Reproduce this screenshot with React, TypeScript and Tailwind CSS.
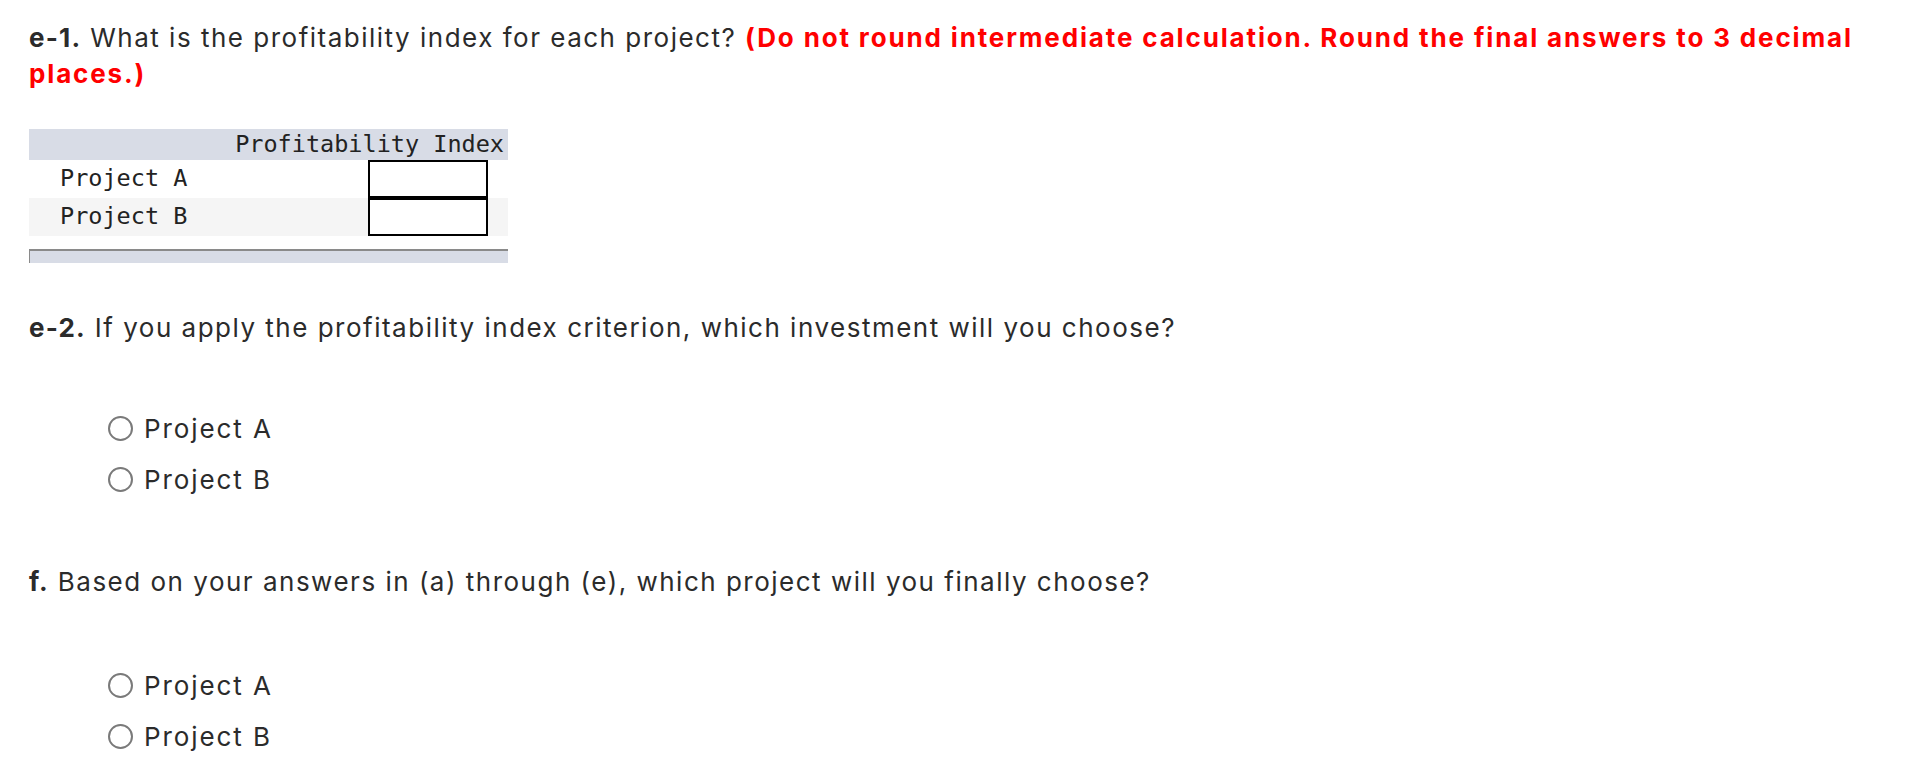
import React from "react";

const sans = "font-['Inter','Noto_Sans',sans-serif]";
const mono = "font-['DejaVu_Sans_Mono','Liberation_Mono',monospace]";

function Radio({ label }: { label: string }) {
  return (
    <label className="flex items-center h-[51px] gap-[11px]">
      <span className="w-[25px] h-[25px] rounded-full border-2 border-[#7a7a7a] bg-white shrink-0" />
      <span className="text-[26px] tracking-[1.9px] text-[#2b2b2b]">{label}</span>
    </label>
  );
}

export default function App() {
  return (
    <div className={`bg-white min-h-[775px] w-[1912px] pl-[29px] pt-[20px] ${sans} text-[#2b2b2b]`}>
      <p className="text-[26px] leading-[36px] tracking-[1.5px]">
        <b className="font-bold tracking-[1.2px]">e-1.</b> What is the profitability index for each project?{" "}
        <b className="font-bold text-[#ff0000] tracking-[1.85px]">
          (Do not round intermediate calculation. Round the final answers to 3 decimal
          <br />
          places.)
        </b>
      </p>

      <div className={`mt-[37px] w-[479px] ${mono} text-[23.5px] text-[#222]`}>
        <div className="h-[31px] bg-[#d8dce6] flex items-center justify-end pr-[4px] leading-none">
          Profitability Index
        </div>
        <div className="h-[38px] bg-white flex items-center">
          <span className="pl-[31px] flex-1">Project A</span>
          <div className="w-[120px] h-[38px] border-2 border-black bg-white mr-[20px]" />
        </div>
        <div className="h-[38px] bg-[#f5f5f5] flex items-center">
          <span className="pl-[31px] flex-1">Project B</span>
          <div className="w-[120px] h-[38px] border-2 border-black bg-white mr-[20px]" />
        </div>
        <div className="mt-[13px] h-[14px] bg-[#d8dce6] border-t-2 border-l border-t-[#8a8a8a] border-l-[#8a8a8a]" />
      </div>

      <p className="mt-[47px] text-[26px] leading-[36px] tracking-[1.5px]">
        <b className="font-bold tracking-[1.2px]">e-2.</b> If you apply the profitability index criterion, which investment will you choose?
      </p>
      <div className="mt-[57px] pl-[79px]">
        <Radio label="Project A" />
        <Radio label="Project B" />
      </div>

      <p className="mt-[59px] text-[26px] leading-[36px] tracking-[1.5px]">
        <b className="font-bold tracking-[1.2px]">f.</b> Based on your answers in (a) through (e), which project will you finally choose?
      </p>
      <div className="mt-[60px] pl-[79px]">
        <Radio label="Project A" />
        <Radio label="Project B" />
      </div>
    </div>
  );
}
